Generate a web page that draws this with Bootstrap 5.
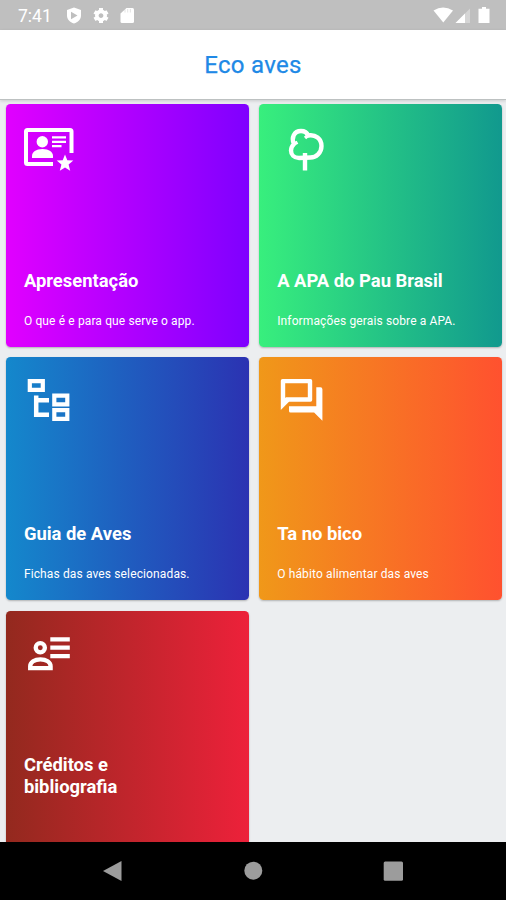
<!DOCTYPE html>
<html lang="pt-BR">
<head>
<meta charset="utf-8">
<meta name="viewport" content="width=device-width, initial-scale=1">
<title>Eco aves</title>
<link href="https://cdn.jsdelivr.net/npm/bootstrap@5.3.0/dist/css/bootstrap.min.css" rel="stylesheet">
<style>
body{font-family:Roboto,"Liberation Sans",sans-serif;background:#eceef0}
.status-bar{height:30px;background:#bfbfbf;font-size:17.5px;padding-left:18px}
.status-icons{margin-left:13px}
.app-bar{height:70px;background:#fff;border-bottom:1.5px solid #bdc1c1;box-shadow:0 1px 3px rgba(0,0,0,.15);color:#2089e6}
.app-bar h1{font-size:24px;font-weight:400;letter-spacing:.3px;line-height:71px;-webkit-text-stroke:.25px #2089e6}
.tiles{display:grid;grid-template-columns:243px 243px;grid-auto-rows:243px;gap:10.3px;padding:4px 4px 0 5.5px}
.tile{border:0;border-radius:4.5px;padding:18px 18px 0 18.4px;color:#fff;box-shadow:0 1px 2px rgba(0,0,0,.25)}
.tile h2{font-size:18.4px;font-weight:700;line-height:22px;margin:92px 0 0}
.tile p{font-size:12px;letter-spacing:.13px;line-height:16px;margin:21px 0 0}
.tile .two-line{margin-top:69px}
.g-purple{background:linear-gradient(90deg,#e100ff,#7f00ff)}
.g-green{background:linear-gradient(90deg,#38ef7d,#11998e)}
.g-blue{background:linear-gradient(90deg,#1488cc,#2b32b2)}
.g-orange{background:linear-gradient(90deg,#f09819,#ff512f)}
.g-red{background:linear-gradient(90deg,#93291e,#ed213a)}
.nav-keys{height:58px;background:#000}
</style>
<script src="https://cdn.jsdelivr.net/npm/bootstrap@5.3.0/dist/js/bootstrap.bundle.min.js"></script>
</head>
<body class="vh-100 overflow-hidden d-flex flex-column">
<div class="status-bar flex-shrink-0 d-flex justify-content-between text-white">
  <div class="d-flex"><span class="lh-1 pt-2">7:41</span>
  <svg class="status-icons" width="72" height="30" viewBox="67 0 72 30" fill="#fff">
    <path fill-rule="evenodd" d="M76 7.500l7 2.500v5.500c0 4-3 6.800-7 8-4-1.200-7-4-7-8v-5.500zM73 11.700v7.600l6.500-3.800z"/>
    <g transform="translate(103 15.600)"><circle r="4.200" fill="none" stroke="#fff" stroke-width="3.600"/><g stroke="#fff" stroke-width="4"><path d="M0-7.500v2.500M0 7.500V5M-6.500-3.750l2 1.200M6.500 3.750l-2-1.200M6.500-3.750l-2 1.200M-6.500 3.750l2-1.200"/></g></g>
    <path d="M128.500 8h6q1.500 0 1.500 1.500v12q0 1.500-1.500 1.500h-10.500q-1.500 0-1.500-1.500v-8z"/><path d="M127 9.500v3M129.700 9v3.500M132.400 9v3.500" stroke="#bfbfbf" stroke-width=".8" opacity=".5"/>
  </svg></div>
  <svg width="76" height="30" viewBox="430 0 76 30" fill="#fff">
    <path d="M433.500 10.500q9.500-6 19.500 0l-9.700 12z"/>
    <path d="M470 8.500v14.500h-14.500z" opacity=".35"/><path d="M465 13.500V23h-9.500z"/>
    <path d="M482 7h4v1.700h3.500V23h-11V8.700h3.500z"/>
  </svg>
</div>
<header class="app-bar flex-shrink-0 text-center"><h1 class="m-0">Eco aves</h1></header>
<main class="flex-grow-1 overflow-hidden">
<div class="tiles">
  <section class="tile card g-purple">
    <svg width="56" height="56" viewBox="24 122 56 56">
      <path d="M53 164H27.500q-1.500 0-1.500-1.500v-31q0-1.500 1.500-1.500h42.500q1.500 0 1.500 1.500V153" fill="none" stroke="#fff" stroke-width="4"/>
      <g fill="#fff"><circle cx="42.300" cy="141.800" r="5.700"/><path d="M32 158v-2c0-4 4-7 10.500-7s10.500 3 10.500 7v2z"/><path d="M65 154.500l2.300 5.700 6 .4-4.700 3.900 1.600 6.300-5.200-3.400-5.200 3.400 1.600-6.300-4.700-3.900 6-.4z"/></g>
      <path d="M52 137.300h14M52 141.800h14M52 146.200h9.500" stroke="#fff" stroke-width="2.200"/>
    </svg>
    <h2>Apresentação</h2><p>O que é e para que serve o app.</p>
  </section>
  <section class="tile card g-green">
    <svg width="56" height="56" viewBox="277 122 56 56" fill="none" stroke="#fff" stroke-width="4.400" stroke-linejoin="round">
      <path d="M299 158c-5 0-8-3.500-8-7.500 0-3 1.500-5 3-6.500-3-6 0-13 7-13 3.500 0 6 1.700 7 4.500 7.500-1.500 13.500 3.500 13.500 10.500s-5.500 11.500-11 11.500z"/><path d="M305 153v17.500"/><path d="M294 144l3.500-1.800M308 135.500l-3 2.500" stroke-width="3.500"/>
    </svg>
    <h2>A APA do Pau Brasil</h2><p>Informações gerais sobre a APA.</p>
  </section>
  <section class="tile card g-blue">
    <svg width="56" height="56" viewBox="24 375 56 56" fill="none" stroke="#fff" stroke-width="4.200">
      <path d="M29.800 381.200h13v8.700h-13zM54.300 395.700h13v8.700h-13zM54.300 410.100h13v8.700h-13z"/><path d="M36.200 395.500v19.300H49M36.200 400.300H49" stroke-width="4.500"/>
    </svg>
    <h2>Guia de Aves</h2><p>Fichas das aves selecionadas.</p>
  </section>
  <section class="tile card g-orange">
    <svg width="56" height="56" viewBox="277 375 56 56" fill="#fff">
      <path fill-rule="evenodd" d="M282.500 379h28q1.700 0 1.700 1.700V400q0 1.700-1.700 1.700H289l-8.200 8.200v-29.200q0-1.700 1.700-1.700zM285.200 383.300V398l.8-.8h21.800v-13.900z"/>
      <path d="M316.300 387.300h4.200q1.900 0 1.900 1.900v31.500l-8.300-8.300H290.500q-1.500 0-1.500-1.500V406.200h27.300z"/>
    </svg>
    <h2>Ta no bico</h2><p>O hábito alimentar das aves</p>
  </section>
  <section class="tile card g-red">
    <svg width="56" height="56" viewBox="24 628.500 56 56" fill="none" stroke="#fff" stroke-width="4.300">
      <circle cx="40.300" cy="647.200" r="4.600"/><path d="M30.200 667.700v-2c0-4 4.300-6.800 10.200-6.800s10.200 2.800 10.200 6.800v2z"/><path d="M50.300 638.800h19.500M50.300 647.200h19.500M50.300 655.600h19.500"/>
    </svg>
    <h2 class="two-line">Créditos e<br>bibliografia</h2>
  </section>
</div>
</main>
<footer class="nav-keys flex-shrink-0 d-flex justify-content-center">
  <svg width="506" height="58" viewBox="0 842 506 58" fill="#9c9c9c"><path d="M121.500 861v20l-18.500-10z"/><circle cx="253.300" cy="870.700" r="9"/><rect x="383.700" y="861.500" width="19.300" height="19.300" rx="1.500"/></svg>
</footer>
</body>
</html>
